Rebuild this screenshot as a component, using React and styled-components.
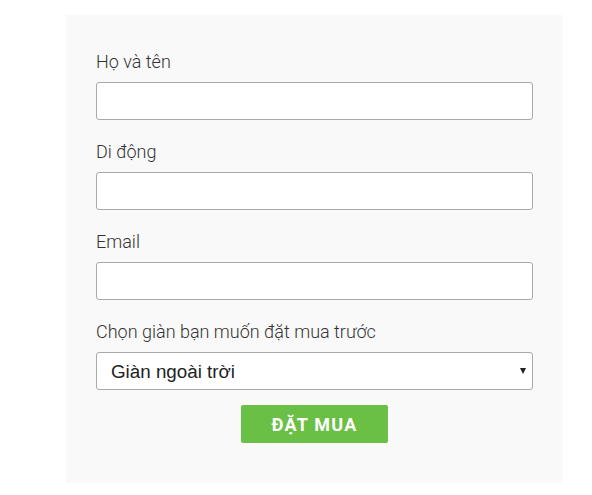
import React from "react";
import styled, { createGlobalStyle } from "styled-components";

const Global = createGlobalStyle`
  html, body { margin: 0; padding: 0; background: #ffffff; }
  body { font-family: Roboto, "Noto Sans", Arial, sans-serif; }
  * { box-sizing: border-box; }
`;

const Page = styled.div`
  padding: 15px 29px 12px 66px;
`;

const Panel = styled.form`
  width: 497px;
  background: #f9f9f9;
  padding: 36px 30px 40px 30px;
  display: flex;
  flex-direction: column;
  gap: 21px;
`;

const Group = styled.div`
  display: flex;
  flex-direction: column;
`;

const Label = styled.label`
  font-size: 18px;
  line-height: 22px;
  color: #333333;
  font-weight: 300;
  margin-bottom: 9px;
`;

const Input = styled.input`
  width: 437px;
  height: 38px;
  border: 1px solid #a9a9a9;
  border-radius: 3px;
  background: #ffffff;
  padding: 0 12px;
  font-family: inherit;
  font-size: 16px;
  outline: none;
`;

const SelectWrap = styled.div`
  position: relative;
  width: 437px;
`;

const Select = styled.select`
  appearance: none;
  -webkit-appearance: none;
  width: 437px;
  height: 38px;
  border: 1px solid #a9a9a9;
  border-radius: 3px;
  background: #ffffff;
  padding: 0 14px;
  font-family: "Liberation Sans", Arial, sans-serif;
  font-weight: 400;
  font-size: 18.8px;
  color: #222222;
  outline: none;
`;

const Caret = styled.span`
  position: absolute;
  right: 7px;
  top: 16px;
  width: 0;
  height: 0;
  border-left: 3.5px solid transparent;
  border-right: 3.5px solid transparent;
  border-top: 6px solid #222222;
  pointer-events: none;
`;

const Actions = styled.div`
  display: flex;
  justify-content: center;
  margin-top: -6px;
`;

const Button = styled.button`
  width: 147px;
  height: 38px;
  background: #6abf45;
  border: none;
  border-radius: 2px;
  color: #ffffff;
  font-family: Roboto, "Noto Sans", Arial, sans-serif;
  font-weight: 700;
  font-size: 18px;
  letter-spacing: 1.2px;
  cursor: pointer;
`;

const fields = ["Họ và tên", "Di động", "Email"];

export default function App() {
  return (
    <>
      <Global />
      <Page>
        <Panel onSubmit={(e) => e.preventDefault()}>
          {fields.map((f) => (
            <Group key={f}>
              <Label>{f}</Label>
              <Input type="text" />
            </Group>
          ))}
          <Group>
            <Label>Chọn giàn bạn muốn đặt mua trước</Label>
            <SelectWrap>
              <Select defaultValue="ngoai">
                <option value="ngoai">Giàn ngoài trời</option>
                <option value="trong">Giàn trong nhà</option>
              </Select>
              <Caret />
            </SelectWrap>
          </Group>
          <Actions>
            <Button type="submit">ĐẶT MUA</Button>
          </Actions>
        </Panel>
      </Page>
    </>
  );
}
